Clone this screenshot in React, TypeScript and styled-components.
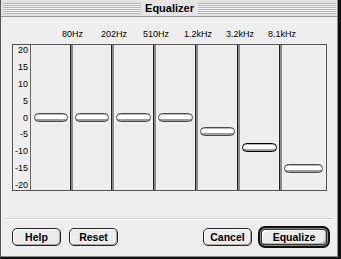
import React from 'react'
import styled, { createGlobalStyle } from 'styled-components'

const GlobalStyle = createGlobalStyle`
  html, body { margin: 0; padding: 0; background: #eeeeee; }
  body { font-family: "Liberation Sans", Arial, sans-serif; color: #000; }
`

const Window = styled.div`
  box-sizing: border-box;
  width: 341px;
  height: 259px;
  display: flex;
  flex-direction: column;
  background: #eeeeee;
  border-left: 1px solid #555;
  border-right: 3px solid #111;
  border-bottom: 2px solid #111;
`

const Frame = styled.div`
  flex: 1;
  display: flex;
  flex-direction: column;
  border-right: 1px solid #8c8c8c;
  border-bottom: 1px solid #8c8c8c;
`

const TitleBar = styled.div`
  box-sizing: border-box;
  height: 17px;
  padding: 3px 1px 2px 2px;
  display: flex;
  background: #e4e4e4;
  border-bottom: 1px solid #9a9a9a;
`

const Stripes = styled.div`
  flex: 1;
  background: repeating-linear-gradient(to bottom, #b4b4b4 0 1px, #f6f6f6 1px 2px);
`

const Title = styled.div`
  padding: 0 4px;
  font-size: 11px;
  line-height: 11px;
  font-weight: bold;
`

const Body = styled.div`
  padding: 12px 0 0 11px;
`

const FreqRow = styled.div`
  display: grid;
  grid-template-columns: 41px repeat(5, 42px);
  margin-left: 40px;
  font-size: 9px;
  line-height: 10px;
  height: 10px;
`

const Freq = styled.div`
  text-align: center;
`

const Panel = styled.div`
  box-sizing: border-box;
  margin-top: 5px;
  width: 315px;
  height: 147px;
  border: 1px solid #555;
  display: flex;
`

const Scale = styled.div`
  box-sizing: border-box;
  width: 18px;
  border-right: 1px solid #666;
  padding-right: 2px;
  display: flex;
  flex-direction: column;
  justify-content: space-between;
  align-items: flex-end;
  font-size: 9px;
  line-height: 10px;
`

const Channel = styled.div<{ $w: number }>`
  width: ${p => p.$w}px;
  display: flex;
`

const Groove = styled.div`
  width: 2px;
  border-left: 1px solid #222;
  background: #8a8a8a;
`

const Lane = styled.div<{ $l: number; $r: number }>`
  flex: 1;
  position: relative;
  & > div {
    left: ${p => p.$l}px;
    right: ${p => p.$r}px;
  }
`

const Thumb = styled.div<{ $active?: boolean }>`
  position: absolute;
  box-sizing: border-box;
  height: 9px;
  border: 1px solid ${p => (p.$active ? '#000' : '#4a4a4a')};
  border-radius: 4.5px;
  background: linear-gradient(to bottom, #b8b8b8 0, #b8b8b8 1px, #fff 1px, #fff 5px, #9c9c9c 5px);
`

const Divider = styled.div`
  margin: 27px 3px 0 3px;
  height: 1px;
  background: #d2d2d2;
  box-shadow: 0 1px 0 #fff;
`

const Footer = styled.div`
  margin-top: 7px;
  height: 22px;
  padding: 0 7px 0 11px;
  display: flex;
  align-items: center;
  gap: 8px;
`

const Spacer = styled.div`
  flex: 1;
`

const Button = styled.button<{ $default?: boolean }>`
  box-sizing: border-box;
  width: ${p => (p.$default ? 72 : 49)}px;
  height: ${p => (p.$default ? 22 : 18)}px;
  margin-left: ${p => (p.$default ? -2 : 0)}px;
  padding: 0;
  border: ${p => (p.$default ? '2px solid #111' : '1px solid #222')};
  border-radius: ${p => (p.$default ? 7 : 5)}px;
  background: #ececec;
  box-shadow: ${p =>
    p.$default
      ? 'inset 0 0 0 1px #8a8a8a, inset 0 0 0 2px #333, inset 3px 3px 0 #fff, inset -3px -3px 0 #b4b4b4'
      : 'inset 1px 1px 0 #fff, inset -1px -1px 0 #a8a8a8'};
  font-family: "Liberation Sans", Arial, sans-serif;
  font-size: 10.5px;
  font-weight: bold;
  color: #000;
`

const scale = ['20', '15', '10', '5', '0', '-5', '-10', '-15', '-20']

const bands = [
  { label: '80Hz', value: 0, w: 39 },
  { label: '202Hz', value: 0, w: 41 },
  { label: '510Hz', value: 0, w: 42 },
  { label: '1.2kHz', value: 0, w: 42 },
  { label: '3.2kHz', value: -4, w: 42 },
  { label: '8.1kHz', value: -9, w: 42 },
  { label: '', value: -15, w: 47 },
]

const App = () => {
  return (
    <>
      <GlobalStyle />
      <Window>
        <Frame>
          <TitleBar>
            <Stripes />
            <Title>Equalizer</Title>
            <Stripes />
          </TitleBar>
          <Body>
            <FreqRow>
              {bands.slice(0, 6).map(b => (
                <Freq key={b.label}>{b.label}</Freq>
              ))}
            </FreqRow>
            <Panel>
              <Scale>
                {scale.map(s => (
                  <span key={s}>{s}</span>
                ))}
              </Scale>
              {bands.map((b, i) => (
                <Channel key={i} $w={b.w}>
                  {i > 0 && <Groove />}
                  <Lane $l={i === 0 ? 3 : 2} $r={i === 6 ? 3 : 2}>
                    <Thumb
                      $active={i === 5}
                      style={{ top: 72.5 - (b.value * 135) / 40 - 4.5 }}
                    />
                  </Lane>
                </Channel>
              ))}
            </Panel>
          </Body>
          <Divider />
          <Footer>
            <Button>Help</Button>
            <Button>Reset</Button>
            <Spacer />
            <Button>Cancel</Button>
            <Button $default>Equalize</Button>
          </Footer>
        </Frame>
      </Window>
    </>
  )
}

export default App
